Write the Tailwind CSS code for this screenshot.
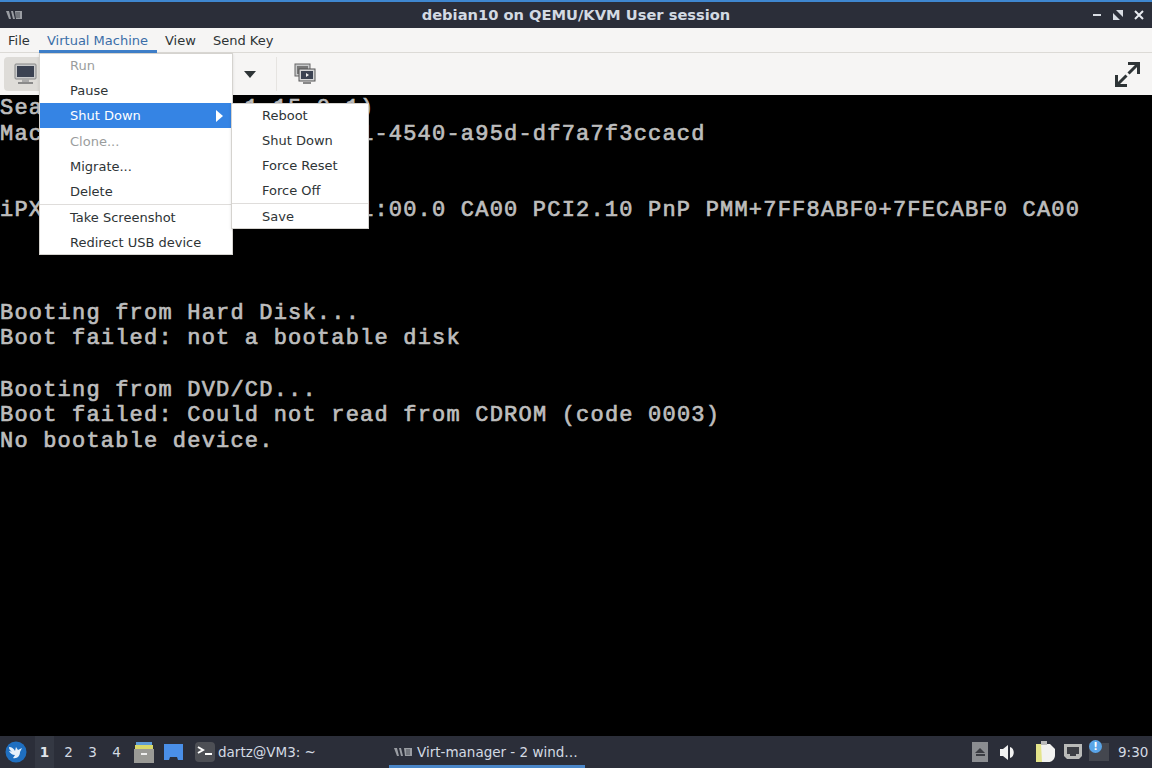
<!DOCTYPE html>
<html lang="en">
<head>
<meta charset="UTF-8">
<title>debian10 on QEMU/KVM User session</title>
<script src="https://cdn.jsdelivr.net/npm/@tailwindcss/browser@4"></script>
</head>
<body class="relative w-[1152px] h-[768px] overflow-hidden flex flex-col bg-black font-['DejaVu_Sans',sans-serif] text-[13px]">

  <!-- Title bar -->
  <div class="h-[28px] shrink-0 bg-[#2b2e39] border-t-2 border-[#3f87d0] flex items-center relative">
    <svg class="ml-[5px] w-[18px] h-[12px]" viewBox="0 0 18 12"><path d="M1 2h3l2 8H4zM6 2h2l2 8H8zM10 2h7v8h-6z" fill="#9a9da3"/><path d="M12 3v6M14 3v6" stroke="#4b4e57"/></svg>
    <div class="absolute inset-x-0 text-center font-bold text-[14.67px] text-[#d3dae3]">debian10 on QEMU/KVM User session</div>
    <div class="ml-auto flex items-center gap-[11px] pr-[8px]">
      <svg class="w-[10px] h-[10px]" viewBox="0 0 10 10"><rect x="1" y="4" width="8" height="2" fill="#d8dce3"/></svg>
      <svg class="w-[10px] h-[10px]" viewBox="0 0 10 10"><path d="M0 10V3l7 7zM10 0v7L3 0z" fill="#d8dce3"/></svg>
      <svg class="w-[10px] h-[10px]" viewBox="0 0 10 10"><path d="M1 1l8 8M9 1l-8 8" stroke="#e8ebf0" stroke-width="2"/></svg>
    </div>
  </div>

  <!-- Menu bar -->
  <div class="h-[25px] shrink-0 bg-[#f6f5f4] border-b border-[#dcdad6] flex text-[#2e3436]">
    <span class="w-[39px] pl-[8px] leading-[26px]">File</span>
    <span class="w-[118px] pl-[8px] leading-[26px] text-[#3b6ea8] border-b-[3px] border-[#3f7fc9] h-[25px] whitespace-nowrap">Virtual Machine</span>
    <span class="w-[48px] pl-[8px] leading-[26px]">View</span>
    <span class="pl-[8px] leading-[26px]">Send Key</span>
  </div>

  <!-- Toolbar -->
  <div class="h-[42px] shrink-0 bg-[#f6f5f4] flex items-center relative">
    <div class="ml-[4px] w-[40px] h-[34px] rounded bg-[#dedcd8] flex items-center pl-[10px]">
      <svg class="w-[24px] h-[22px]" viewBox="0 0 24 22"><rect x="1" y="1" width="21" height="15" rx="1" fill="#c9cacb" stroke="#888"/><rect x="3" y="3" width="17" height="11" fill="#3b4252"/><rect x="8" y="16" width="7" height="3" fill="#aaa"/><rect x="4" y="19" width="15" height="2" fill="#8a8a8a"/></svg>
    </div>
    <svg class="ml-[200px] w-[12px] h-[7px]" viewBox="0 0 12 7"><path d="M0 0h12L6 7z" fill="#2e3436"/></svg>
    <div class="ml-[20px] w-px h-[34px] bg-[#e6e4e1]"></div>
    <svg class="ml-[17px] w-[22px] h-[22px]" viewBox="0 0 22 22"><rect x="1" y="1" width="15" height="12" fill="#c9cacb" stroke="#666"/><rect x="3" y="3" width="11" height="8" fill="#777"/><rect x="5" y="6" width="16" height="12" fill="#d4d5d6" stroke="#555"/><rect x="7" y="8" width="12" height="8" fill="#3b4252"/><path d="M12 10l3 2-3 2z" fill="#eee"/><rect x="9" y="19" width="8" height="2" fill="#888"/></svg>
    <svg class="ml-auto mr-[12px] w-[25px] h-[25px]" viewBox="0 0 25 25"><path d="M13 1.500h10.500V12M23 2l-9.500 9.500M12 23.500H1.500V13M2 23l9.500-9.500" fill="none" stroke="#2e3436" stroke-width="3"/></svg>
  </div>

  <!-- Console -->
  <div class="h-[641px] shrink-0 pt-[1px] bg-black text-[#bdbdbd] font-['Liberation_Mono',monospace] text-[22px] tracking-[1.2px] leading-[25.6px] whitespace-nowrap overflow-hidden [-webkit-text-stroke:0.7px_#bdbdbd]">
    <div class="flex"><span>Sea</span><span class="ml-[201.6px]">1.15.0-1)</span></div>
    <div class="flex"><span>Mac</span><span class="ml-[316.8px]">1-4540-a95d-df7a7f3ccacd</span></div>
    <div class="h-[51.2px]"></div>
    <div class="flex"><span>iPX</span><span class="ml-[316.8px]">1:00.0 CA00 PCI2.10 PnP PMM+7FF8ABF0+7FECABF0 CA00</span></div>
    <div class="h-[76.8px]"></div>
    <div>Booting from Hard Disk...</div>
    <div>Boot failed: not a bootable disk</div>
    <div class="h-[25.6px]"></div>
    <div>Booting from DVD/CD...</div>
    <div>Boot failed: Could not read from CDROM (code 0003)</div>
    <div>No bootable device.</div>
  </div>

  <!-- Taskbar -->
  <div class="h-[32px] shrink-0 bg-[#2b2e39] flex items-center text-[#d3dae3] text-[13.5px]">
    <svg class="ml-[5px] w-[22px] h-[22px]" viewBox="0 0 22 22"><circle cx="11" cy="11" r="10.500" fill="#1f6fc0"/><path d="M4 6c3 0 5 2 6 4l1-4 2 3 4-2-2 4c0 4-3 7-7 6l2-3c-3 0-5-2-6-4l3 .5C5 9.500 4 8 4 6z" fill="#e8f1fa"/></svg>
    <span class="ml-[8px] w-[19px] h-[32px] bg-[#343843] leading-[32px] text-center font-bold text-[#e0e4ea]">1</span>
    <span class="ml-[5px] w-[19px] text-center">2</span>
    <span class="ml-[5px] w-[19px] text-center">3</span>
    <span class="ml-[5px] w-[19px] text-center">4</span>
    <svg class="ml-[7px] w-[22px] h-[22px]" viewBox="0 0 22 22"><path d="M3 1h16v4H3z" fill="#5d9bd6"/><path d="M2 4h18v5H2z" fill="#d8d86a"/><rect x="1" y="8" width="20" height="14" fill="#9a9a96"/><rect x="8" y="12" width="6" height="2" fill="#eee"/></svg>
    <svg class="ml-[8px] w-[21px] h-[18px]" viewBox="0 0 21 18"><path d="M1 1h19v16H15l-1-3H7l-1 3H1z" fill="#4a8fe8"/></svg>
    <div class="ml-[11px] w-[20px] h-[20px] rounded-sm bg-[#4d4f55] flex items-center justify-center">
      <svg class="w-[16px] h-[12px]" viewBox="0 0 16 12"><path d="M1 1l5 3-5 3" fill="none" stroke="#fff" stroke-width="2"/><rect x="8" y="7" width="7" height="2" fill="#fff"/></svg>
    </div>
    <span class="ml-[3px] w-[171px]">dartz@VM3: ~</span>
    <div class="w-[196px] h-[32px] border-b-[3px] border-[#4a86c8] flex items-center pl-[5px] pt-[3px]">
      <svg class="w-[19px] h-[10px]" viewBox="0 0 19 10"><path d="M0 1h3l2 8H3zM5 1h2l2 8H7zM10 1h8v8h-7z" fill="#9a9da3"/><path d="M13 2v6M15 2v6" stroke="#4b4e57"/></svg>
      <span class="ml-[4px]">Virt-manager - 2 wind…</span>
    </div>
    <div class="ml-[387px] w-[16px] h-[20px] bg-[#8b8d91] flex flex-col items-center justify-center gap-[1px]">
      <div class="w-0 h-0 border-x-[5px] border-x-transparent border-b-[5px] border-b-[#3a3c42]"></div>
      <div class="w-[9px] h-[2px] bg-[#3a3c42]"></div>
    </div>
    <svg class="ml-[12px] w-[16px] h-[15px]" viewBox="0 0 16 15"><path d="M0 4h3l5-4v15l-5-4H0z" fill="#f2f2f2"/><path d="M10 2c5 1 5 10 0 11z" fill="#f2f2f2"/></svg>
    <svg class="ml-[20px] w-[20px] h-[22px]" viewBox="0 0 20 22"><rect x="0" y="3" width="14" height="18" fill="#e4e48a"/><path d="M5 3h9l5 5v6c0 4-3 7-6 7H6z" fill="#f2f2f0"/><rect x="5" y="0" width="6" height="4" fill="#bbb"/></svg>
    <svg class="ml-[7px] w-[20px] h-[18px]" viewBox="0 0 20 18"><path d="M1 1h18v12l-3 3H4l-3-3z" fill="#b9bab8"/><path d="M4 4h12v7h-3v2H7v-2H4z" fill="#3c3e44"/></svg>
    <div class="relative ml-[6px] w-[20px] h-[18px] bg-[#44474f]">
      <div class="absolute left-0 -top-[3px] w-[13px] h-[13px] rounded-full bg-[#5aa5e8] text-white text-[10px] font-bold leading-[13px] text-center">!</div>
    </div>
    <span class="ml-[9px]">9:30</span>
  </div>

  <!-- Virtual Machine menu -->
  <div class="absolute left-[39px] top-[53px] w-[194px] h-[202px] bg-white border border-[#d5d3cf] text-[#2e3436] shadow-sm">
    <div class="h-[24px] leading-[23px] pl-[30px] text-[#9a9d9d]">Run</div>
    <div class="h-[25px] leading-[25px] pl-[30px]">Pause</div>
    <div class="h-[25px] leading-[25px] pl-[30px] pr-[9px] w-[192px] bg-[#3584e4] text-white flex justify-between items-center">
      <span>Shut Down</span>
      <svg class="w-[7px] h-[12px]" viewBox="0 0 7 12"><path d="M0 0l7 6-7 6z" fill="#fff"/></svg>
    </div>
    <div class="h-[26px] leading-[27px] pl-[30px] text-[#9a9d9d]">Clone...</div>
    <div class="h-[25px] leading-[25px] pl-[30px]">Migrate...</div>
    <div class="h-[26px] leading-[25px] pl-[30px] border-b border-[#dfdddb]">Delete</div>
    <div class="h-[25px] leading-[25px] pl-[30px]">Take Screenshot</div>
    <div class="h-[24px] leading-[26px] pl-[30px]">Redirect USB device</div>
  </div>

  <!-- Shut Down submenu -->
  <div class="absolute left-[231px] top-[103px] w-[138px] h-[126px] bg-white border border-[#d5d3cf] text-[#2e3436] shadow-sm">
    <div class="h-[25px] leading-[23px] pl-[30px]">Reboot</div>
    <div class="h-[25px] leading-[23px] pl-[30px]">Shut Down</div>
    <div class="h-[25px] leading-[23px] pl-[30px]">Force Reset</div>
    <div class="h-[25px] leading-[23px] pl-[30px] border-b border-[#dfdddb]">Force Off</div>
    <div class="h-[24px] leading-[25px] pl-[30px]">Save</div>
  </div>
</body>
</html>
